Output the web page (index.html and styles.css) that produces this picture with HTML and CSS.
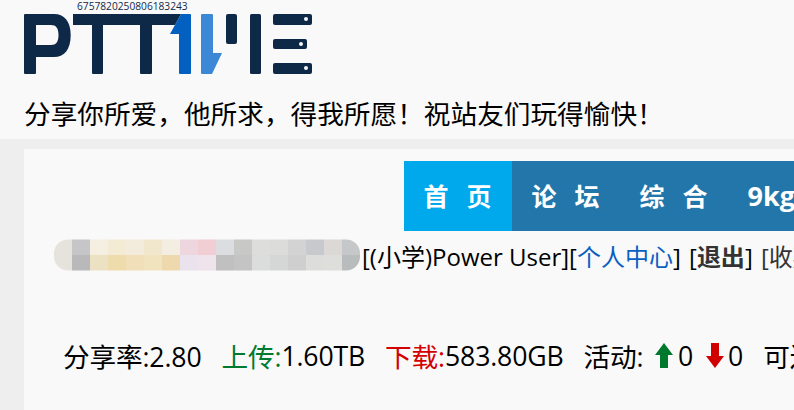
FILE: index.html
```html
<!DOCTYPE html>
<html lang="zh-CN">
<head>
<meta charset="utf-8">
<title>PTT</title>
<link rel="stylesheet" href="styles.css">
</head>
<body>
<header class="site-head">
  <div class="logo-wrap">
    <svg class="logo" width="288" height="60" viewBox="24 14 288 60" aria-label="PTT logo">
      <path class="dark" fill-rule="evenodd" d="M25 14H54C64 14 70.700 21 70.700 35C70.700 50 64 57 54 57H36V73Q36 74 35 74H25Q24 74 24 73V15Q24 14 25 14ZM36 25V45H51C56 45 58.500 42 58.500 35C58.500 28 56 25 51 25Z"/>
      <path class="dark" d="M73 14H181L175 25H152V73Q152 74 151 74H141Q140 74 140 73V25H103V73Q103 74 102 74H93Q92 74 92 73V25H73Z"/>
      <path class="blue" d="M181 14H190Q191 14 191 15V73Q191 74 190 74H180Q179 74 179 73V34H170Z"/>
      <path class="light" d="M202 14H212Q213 14 213 15V53H222L212 74H202Q201 74 201 73V15Q201 14 202 14Z"/>
      <rect class="dark" x="226" y="14" width="11" height="30" rx="2"/>
      <rect class="dark" x="250" y="14" width="11" height="60" rx="1.500"/>
      <rect class="dark" x="273" y="14" width="39" height="11" rx="2"/>
      <rect class="dark" x="273" y="39" width="34" height="10" rx="2"/>
      <rect class="dark" x="273" y="63" width="39" height="11" rx="2"/>
      <circle class="dot" cx="306" cy="19" r="2"/>
      <circle class="dot" cx="301" cy="44" r="2"/>
      <circle class="dot" cx="306" cy="68" r="2"/>
    </svg>
    <span class="logo-id">6757820250806183243</span>
  </div>
  <p class="slogan">分享你所爱，他所求，得我所愿！祝站友们玩得愉快！</p>
</header>
<main class="card">
  <nav class="nav">
    <a class="nav-item is-active">首 页</a>
    <a class="nav-item">论 坛</a>
    <a class="nav-item">综 合</a>
    <a class="nav-item nav-latin">9kg</a>
  </nav>
  <div class="user-row">
    <svg class="mosaic" width="306" height="32" viewBox="0 0 306 32" aria-hidden="true">
      <clipPath id="mosaic-clip"><rect width="306" height="31" y="0.500" rx="14"/></clipPath>
      <g clip-path="url(#mosaic-clip)" shape-rendering="crispEdges">
        <rect width="18" height="32" fill="#e6e3dc"/>
        <rect x="18" width="18" height="16" fill="#c6c6c8"/><rect x="18" y="16" width="18" height="16" fill="#b9b9bc"/>
        <rect x="36" width="18" height="16" fill="#f4efe0"/><rect x="36" y="16" width="18" height="16" fill="#ece2c3"/>
        <rect x="54" width="18" height="16" fill="#f3ebd3"/><rect x="54" y="16" width="18" height="16" fill="#eedcad"/>
        <rect x="72" width="18" height="16" fill="#f3ecdc"/><rect x="72" y="16" width="18" height="16" fill="#f0dfb8"/>
        <rect x="90" width="18" height="16" fill="#f1e7cc"/><rect x="90" y="16" width="18" height="16" fill="#f2e3bf"/>
        <rect x="108" width="18" height="16" fill="#f4eee2"/><rect x="108" y="16" width="18" height="16" fill="#eed9ae"/>
        <rect x="126" width="18" height="16" fill="#eed6de"/><rect x="126" y="16" width="18" height="16" fill="#eae2ed"/>
        <rect x="144" width="18" height="16" fill="#f1cdd4"/><rect x="144" y="16" width="18" height="16" fill="#f0e4ec"/>
        <rect x="162" width="18" height="16" fill="#dcdde1"/><rect x="162" y="16" width="18" height="16" fill="#c0c0c1"/>
        <rect x="180" width="18" height="16" fill="#c8c8c6"/><rect x="180" y="16" width="18" height="16" fill="#c3c4c3"/>
        <rect x="198" width="18" height="16" fill="#dddddb"/><rect x="198" y="16" width="18" height="16" fill="#dbdddc"/>
        <rect x="216" width="18" height="16" fill="#dcdcda"/><rect x="216" y="16" width="18" height="16" fill="#d5d6d6"/>
        <rect x="234" width="18" height="16" fill="#d3d3d3"/><rect x="234" y="16" width="18" height="16" fill="#cfcfcf"/>
        <rect x="252" width="18" height="16" fill="#c8c9cc"/><rect x="252" y="16" width="18" height="16" fill="#dddddb"/>
        <rect x="270" width="18" height="16" fill="#dcd8d6"/><rect x="270" y="16" width="18" height="16" fill="#dededa"/>
        <rect x="288" width="18" height="16" fill="#c5c7c9"/><rect x="288" y="16" width="18" height="16" fill="#b9bcbc"/>
      </g>
    </svg>
    <span>[(小学)Power User][<a class="link">个人中心</a>]<span class="actions"> [<b class="strong">退出</b>] <span class="muted">[收藏]</span></span></span>
  </div>
  <div class="stats-row">
    <span class="stat">分享率:2.80</span>
    <span class="stat"><span class="up">上传:</span>1.60TB</span>
    <span class="stat"><span class="down">下载:</span>583.80GB</span>
    <span class="stat">活动:<svg class="arrow" width="18" height="25" viewBox="0 0 18 25"><path class="up-fill" d="M9 0L18 12H13V25H5V12H0Z"/></svg><span class="count">0</span><svg class="arrow arrow-down" width="18" height="25" viewBox="0 0 18 25"><path class="down-fill" d="M5 0H13V13H18L9 25L0 13H5Z"/></svg><span class="count">0</span></span>
    <span class="stat">可连接:是</span>
  </div>
</main>
</body>
</html>
```
FILE: styles.css
```css
* { box-sizing: border-box; }
html, body { margin: 0; height: 100%; overflow: hidden; }
body {
  width: 794px;
  height: 410px;
  background: #eeeeee;
  font-family: "Open Sans", "Noto Sans CJK SC", sans-serif;
  color: #000;
  font-size: 24px;
}
.site-head {
  background: #f9f9f9;
  height: 139px;
  padding: 14px 0 0 24px;
}
.logo-wrap { position: relative; height: 60px; }
.logo { display: block; }
.logo-id {
  position: absolute;
  left: 53px;
  top: -15px;
  font-size: 10.200px;
  line-height: 14px;
  color: #12294a;
  white-space: nowrap;
}
.dark { fill: #0e2847; }
.blue { fill: #035fc0; }
.light { fill: #3d88d6; }
.dot { fill: #f4f6f8; }
.slogan {
  margin: 22px 0 0;
  font-size: 26.670px;
  line-height: 36px;
  white-space: nowrap;
}
.card {
  width: 770px;
  height: 261px;
  margin: 10px 0 0 24px;
  background: #f9f9f9;
  padding-top: 12px;
  overflow: hidden;
}
.nav {
  display: flex;
  width: 560px;
  margin-left: 380px;
  height: 70px;
  background: #2376aa;
}
.nav-item {
  padding: 0 20.500px 0 19.500px;
  line-height: 70px;
  font-size: 25px;
  font-weight: 700;
  color: #fff;
  white-space: nowrap;
  word-spacing: 11.500px;
}
.nav-latin { font-size: 27px; }
.nav-item.is-active { background: #00a8ec; }
.user-row {
  display: flex;
  align-items: center;
  margin: 8px 0 0 30px;
  height: 32px;
  white-space: nowrap;
}
.mosaic { flex: none; margin-right: 2px; }
.link { color: #0a5fc2; }
.actions { word-spacing: 2px; }
.strong { color: #333; font-weight: 700; }
.muted { color: #333; }
.stats-row {
  display: flex;
  align-items: center;
  gap: 20px;
  margin: 66px 0 0 39px;
  height: 36px;
  font-size: 26.670px;
  letter-spacing: -0.150px;
  white-space: nowrap;
}
.stat { display: inline-flex; align-items: center; }
.arrow { margin-left: 12px; }
.arrow-down { margin-left: 12.500px; }
.count { margin-left: 4.500px; }
.up { color: #007a2e; }
.down { color: #d40000; }
.up-fill { fill: #00792c; }
.down-fill { fill: #d00000; }
```
